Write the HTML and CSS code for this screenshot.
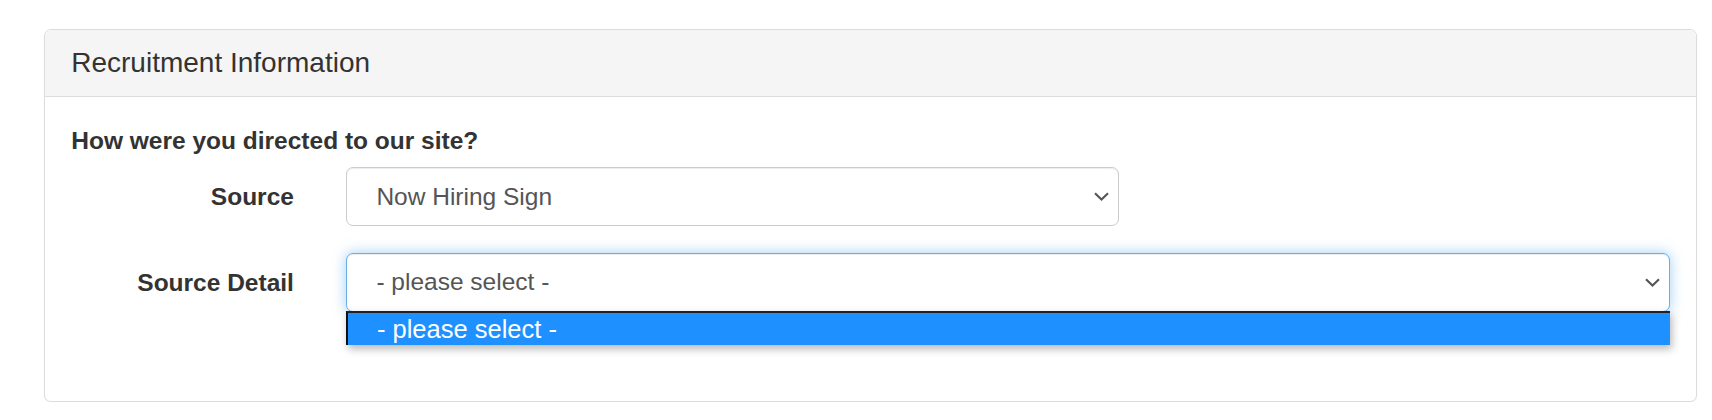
FILE: index.html
```html
<!DOCTYPE html>
<html lang="en">
<head>
<meta charset="utf-8">
<title>Recruitment Information</title>
<link rel="stylesheet" href="styles.css">
</head>
<body>
<div class="page">
  <section class="panel">
    <header class="panel-heading">
      <h3 class="panel-title">Recruitment Information</h3>
    </header>
    <div class="panel-body">
      <p class="question">How were you directed to our site?</p>

      <div class="form-group">
        <label class="control-label">Source</label>
        <div class="field field-half">
          <div class="select">
            <span class="select-value">Now Hiring Sign</span>
            <svg class="chevron" width="15" height="9" viewBox="0 0 15 9" aria-hidden="true">
              <path d="M1 1.2 L7.5 7.5 L14 1.2" fill="none" stroke="#555" stroke-width="2.1"/>
            </svg>
          </div>
        </div>
      </div>

      <div class="form-group">
        <label class="control-label">Source Detail</label>
        <div class="field field-wide">
          <div class="select is-open">
            <span class="select-value">- please select -</span>
            <svg class="chevron" width="15" height="9" viewBox="0 0 15 9" aria-hidden="true">
              <path d="M1 1.2 L7.5 7.5 L14 1.2" fill="none" stroke="#555" stroke-width="2.1"/>
            </svg>
            <ul class="listbox">
              <li class="option selected">- please select -</li>
            </ul>
          </div>
        </div>
      </div>
    </div>
  </section>
</div>
</body>
</html>
```

FILE: styles.css
```css
* {
  box-sizing: border-box;
}

body {
  margin: 0;
  background: #fff;
  font-family: "Liberation Sans", Arial, sans-serif;
  color: #333;
}

.page {
  padding: 29px 15px 0 44px;
}

/* Panel */
.panel {
  background: #fff;
  border: 1px solid #ddd;
  border-radius: 7px;
  box-shadow: 0 1px 2px rgba(0, 0, 0, 0.05);
}

.panel-heading {
  background: #f5f5f5;
  border-bottom: 1px solid #ddd;
  border-radius: 6px 6px 0 0;
  padding: 17.5px 26.25px;
}

.panel-title {
  margin: 0;
  font-size: 28px;
  font-weight: 400;
  line-height: 1.1;
  color: #333;
}

.panel-body {
  padding: 26.25px 26.25px 63px;
}

.question {
  margin: 0 0 8.75px;
  font-size: 24.5px;
  font-weight: 700;
  line-height: 35px;
}

/* Horizontal form rows on a 12-column grid */
.form-group {
  display: grid;
  grid-template-columns: repeat(12, 1fr);
  margin: 0 -26.25px 26.25px;
}

.control-label {
  grid-column: span 2;
  padding: 12.25px 26.25px 0;
  text-align: right;
  font-size: 24.5px;
  font-weight: 700;
  line-height: 35px;
}

.field {
  padding: 0 26.25px;
}

.field-half {
  grid-column: span 6;
}

.field-wide {
  grid-column: span 10;
}

/* Select control */
.select {
  position: relative;
  display: flex;
  align-items: center;
  height: 59.5px;
  padding: 0 9px 0 29px;
  border: 1px solid #ccc;
  border-radius: 7px;
  background: #fff;
  box-shadow: inset 0 1px 1px rgba(0, 0, 0, 0.075);
  font-size: 24.5px;
  color: #555;
}

.select.is-open {
  border-color: #66afe9;
  box-shadow: inset 0 1px 1px rgba(0, 0, 0, 0.075), 0 0 14px rgba(102, 175, 233, 0.6);
}

.select-value {
  flex: 1;
  white-space: nowrap;
}

.chevron {
  flex: none;
  display: block;
}

/* Open option list */
.listbox {
  position: absolute;
  top: 100%;
  left: -1px;
  right: -1px;
  margin: 0;
  padding: 0;
  list-style: none;
  border-top: 2px solid #222;
  border-left: 2px solid #111;
  background: #fff;
  box-shadow: 2px 4px 8px rgba(0, 0, 0, 0.28);
}

.option {
  height: 32px;
  padding: 0 0 0 28.5px;
  font-size: 25.5px;
  line-height: 32px;
  color: #333;
}

.option.selected {
  background: #1e90ff;
  color: #fff;
}
```
